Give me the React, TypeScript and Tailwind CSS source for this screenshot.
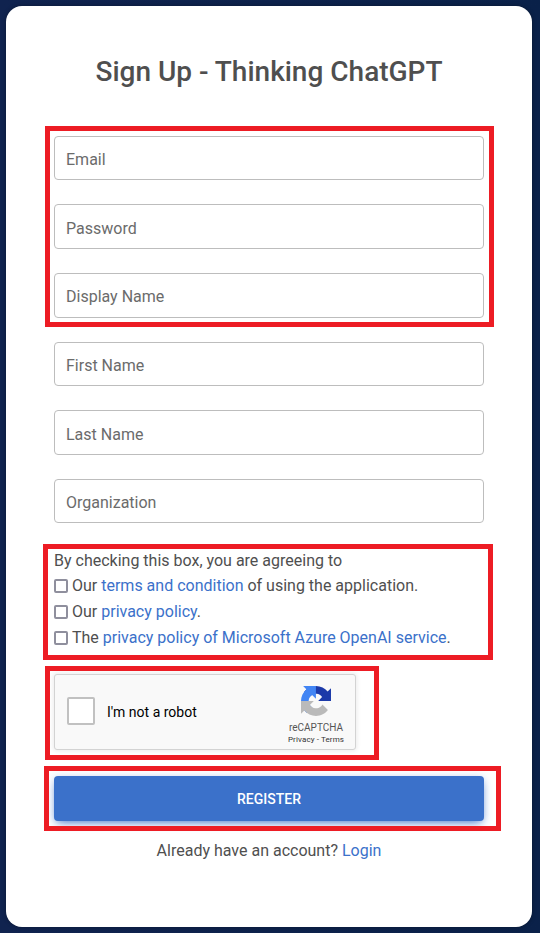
import type { ReactNode } from 'react';

const fields = ['Email', 'Password', 'Display Name', 'First Name', 'Last Name', 'Organization'];

function Highlight({ className }: { className: string }) {
  return <div className={`absolute border-[5px] border-[#ed1c24] pointer-events-none ${className}`} />;
}

function Field({ label }: { label: string }) {
  return (
    <div className="h-[44.6px] flex items-center rounded border border-[#bdbdbd] px-[11px] text-[#6b6b6b]">
      <label className="pt-[4.4px]">{label}</label>
    </div>
  );
}

function Agreement({ children }: { children: ReactNode }) {
  return (
    <div className="flex items-center h-[26px] whitespace-nowrap">
      <span className="w-[14px] h-[14px] mr-1 shrink-0 rounded-[2px] border-2 border-[#8f8f9d] bg-white" />
      <span>{children}</span>
    </div>
  );
}

function Link({ children }: { children: ReactNode }) {
  return <a href="#" className="text-[#3b71ca]">{children}</a>;
}

function RecaptchaLogo() {
  return (
    <svg className="w-[30px] h-[30px]" viewBox="0 0 64 64">
      <path
        fill="#1c3aa9"
        d="M64 31.955l-.033-1.37V4.687l-7.16 7.16C50.948 4.674 42.033.093 32.05.093c-10.4 0-19.622 4.96-25.458 12.64l11.736 11.86a15.55 15.55 0 0 1 4.754-5.334c2.05-1.6 4.952-2.906 8.968-2.906.485 0 .86.057 1.135.163 4.976.393 9.288 3.14 11.828 7.124l-8.307 8.307L64 31.953"
      />
      <path
        fill="#4285f4"
        d="M31.862.094l-1.37.033H4.594l7.16 7.16C4.58 13.147 0 22.06 0 32.046c0 10.4 4.96 19.622 12.64 25.458L24.5 45.768a15.55 15.55 0 0 1-5.334-4.754c-1.6-2.05-2.906-4.952-2.906-8.968 0-.485.057-.86.163-1.135.393-4.976 3.14-9.288 7.124-11.828l8.307 8.307L31.86.095"
      />
      <path
        fill="#bababa"
        d="M.001 32.045l.033 1.37v25.898l7.16-7.16c5.86 7.173 14.774 11.754 24.76 11.754 10.4 0 19.622-4.96 25.458-12.64l-11.736-11.86a15.55 15.55 0 0 1-4.754 5.334c-2.05 1.6-4.952 2.906-8.968 2.906-.485 0-.86-.057-1.135-.163-4.976-.393-9.288-3.14-11.828-7.124l8.307-8.307c-10.522.04-22.4.066-27.295-.005"
      />
    </svg>
  );
}

export default function App() {
  return (
    <div className="w-[540px] h-[933px] overflow-hidden bg-gradient-to-r from-[#10234f] to-[#0a2149] pl-[6px] pr-2 py-[6px] font-['Roboto',sans-serif] text-base text-[#4f4f4f]">
      <div className="h-full rounded-2xl bg-white px-12 pt-[46px] shadow-[0_0_4px_rgba(0,0,0,0.35)]">
        <h1 className="text-center text-[28px] leading-10 font-medium">Sign Up - Thinking ChatGPT</h1>

        {/* Required fields */}
        <div className="relative mt-[43.8px] flex flex-col gap-6">
          {fields.slice(0, 3).map((label) => (
            <Field key={label} label={label} />
          ))}
          <Highlight className="left-[-9px] right-[-10px] top-[-9.8px] h-[201px]" />
        </div>

        {/* Optional fields */}
        <div className="mt-6 flex flex-col gap-6">
          {fields.slice(3).map((label) => (
            <Field key={label} label={label} />
          ))}
        </div>

        {/* Agreements */}
        <div className="relative mt-[25.6px] h-[101px]">
          <p className="leading-6">By checking this box, you are agreeing to</p>
          <Agreement>
            Our <Link>terms and condition</Link> of using the application.
          </Agreement>
          <Agreement>
            Our <Link>privacy policy</Link>.
          </Agreement>
          <Agreement>
            The <Link>privacy policy of Microsoft Azure OpenAI service</Link>.
          </Agreement>
          <Highlight className="left-[-11px] right-[-9px] top-[-5px] h-[116px]" />
        </div>

        {/* Captcha */}
        <div className="relative mt-6 w-[302px] h-[76px] flex items-center rounded-[3px] border border-[#d3d3d3] bg-[#f9f9f9] shadow-[0_0_4px_1px_rgba(0,0,0,0.08)]">
          <span className="ml-3 mb-[2px] w-7 h-7 rounded-[2px] border-2 border-[#c1c1c1] bg-white" />
          <span className="ml-3 text-sm text-black">I'm not a robot</span>
          <div className="ml-auto mr-[10px] pt-2 w-[58px] flex flex-col items-center text-[#555] whitespace-nowrap">
            <RecaptchaLogo />
            <span className="mt-[7px] text-[10px] leading-[10px]">reCAPTCHA</span>
            <span className="mt-[2px] text-[8px] leading-[10px] tracking-[0.12px] text-[#333]">Privacy - Terms</span>
          </div>
          <Highlight className="left-[-10px] top-[-9px] w-[334px] h-[94px]" />
        </div>

        <div className="relative mt-[26px]">
          <button className="block w-full h-[45px] pt-[2px] rounded bg-[#3b71ca] text-sm font-medium text-white shadow-[0_4px_9px_-4px_#3b71ca,0_2px_8px_rgba(59,113,202,0.3)]">
            REGISTER
          </button>
          <Highlight className="left-[-10px] right-[-17px] top-[-10px] h-[65px]" />
        </div>

        <p className="mt-[18px] text-center leading-6">
          Already have an account? <Link>Login</Link>
        </p>
      </div>
    </div>
  );
}
